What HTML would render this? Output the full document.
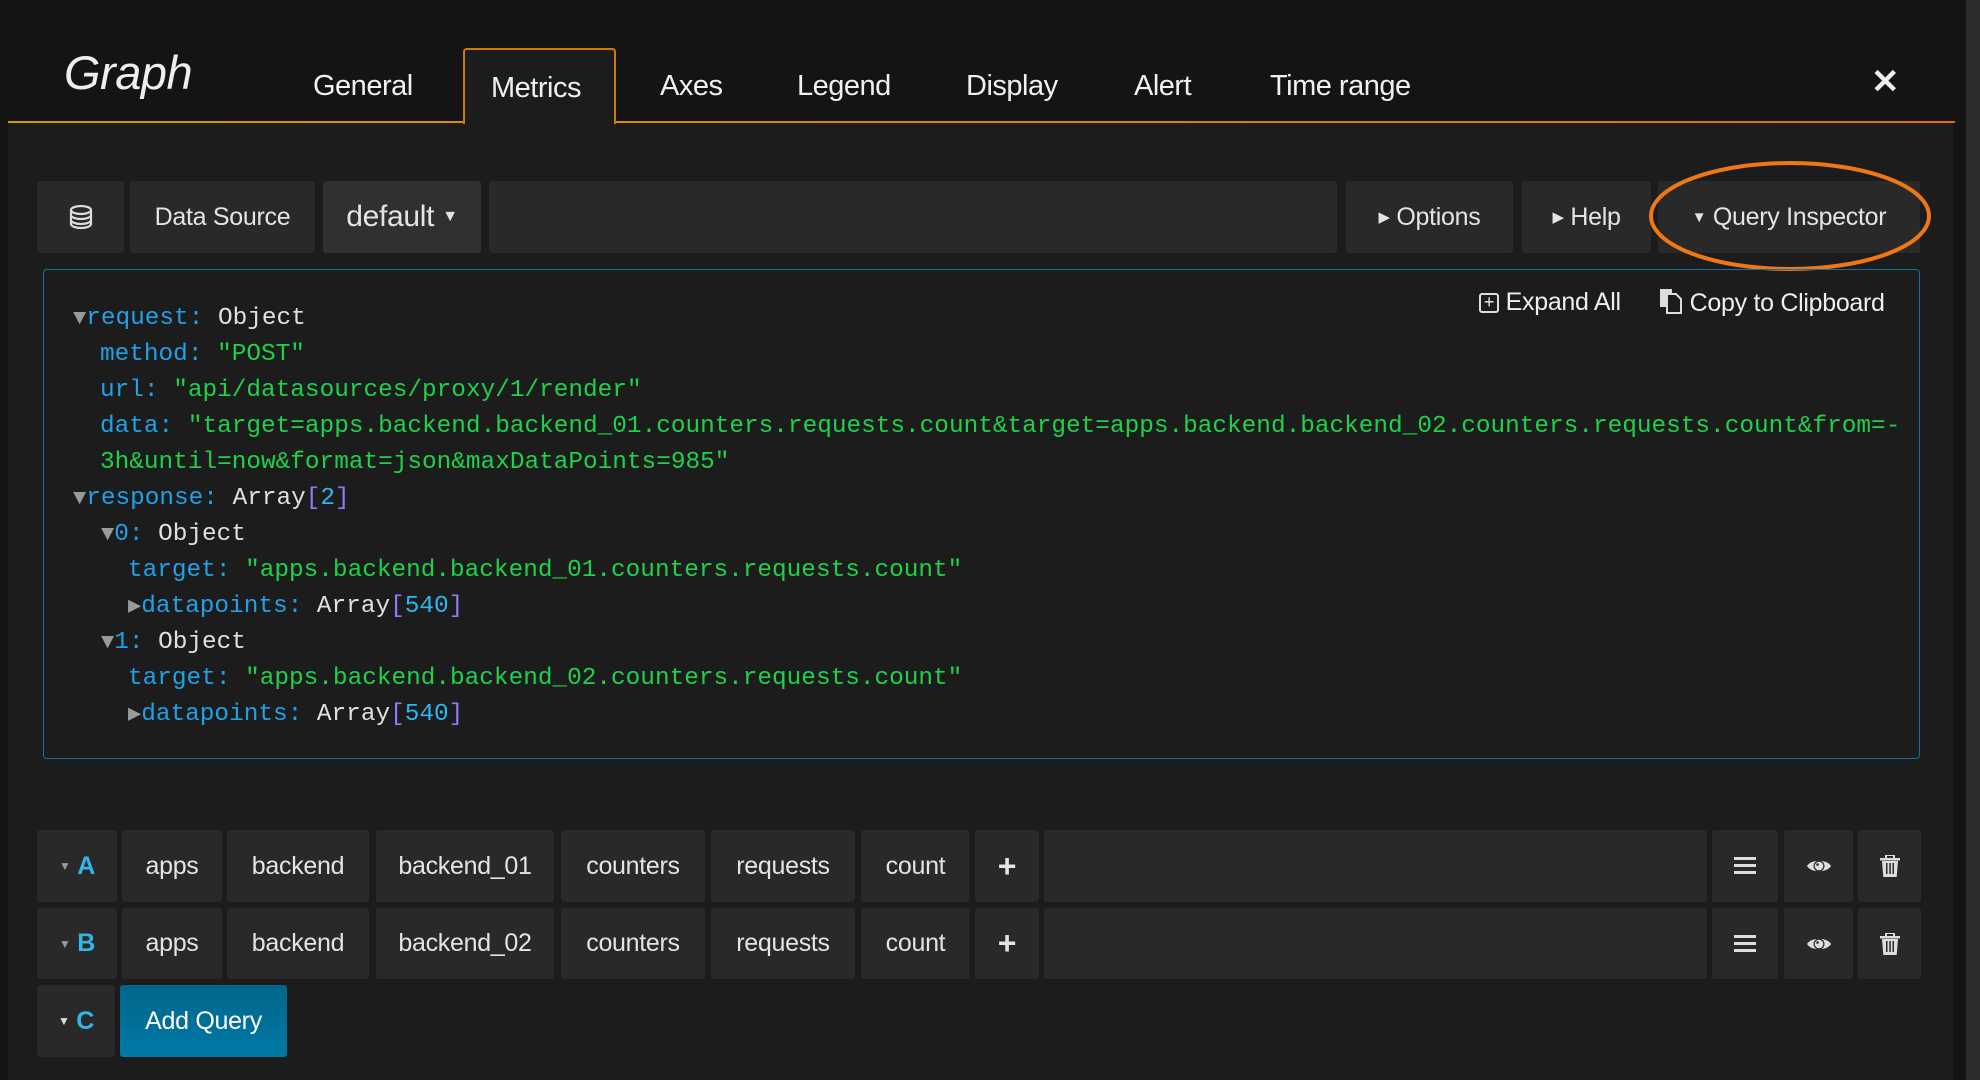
<!DOCTYPE html>
<html><head><meta charset="utf-8"><style>
*{margin:0;padding:0;box-sizing:border-box}
body{width:1980px;height:1080px;background:#141414;position:relative;overflow:hidden;font-family:"Liberation Sans",sans-serif;color:#e8e8e8}
.abs{position:absolute}
.panel{left:8px;top:122px;width:1945px;height:958px;background:#1c1c1d}
.rs{left:1966px;top:0;width:14px;height:1080px;background:#2c2c2c}
.tab{position:absolute;top:70px;font-size:29px;color:#f0f0f0;letter-spacing:-0.5px}
.box{position:absolute;background:#292929;border-radius:3px;display:flex;align-items:center;justify-content:center;font-size:25px;color:#e4e4e4;letter-spacing:-0.3px}
.mono{position:absolute;font-family:"Liberation Mono",monospace;font-size:24.4px;white-space:pre;line-height:36px;color:#e0e0e0}
.k{color:#1ea1e6}.s{color:#1fd14a}.b{color:#8a7cff}.n{color:#2fb5f0}
.tri{color:#9a9a9a;font-size:22px}
.lbl{color:#33b5e5;font-weight:bold;font-size:25px}
</style></head><body>
<div class="abs rs"></div>
<div class="abs panel"></div>
<div class="abs" style="left:8px;top:121px;width:1947px;height:2px;background:linear-gradient(90deg,#d19a00,#e07000)"></div>
<div class="abs" style="left:463px;top:48px;width:153px;height:76px;background:#1c1c1d;border:2px solid #d07a08;border-bottom:none;border-radius:4px 4px 0 0"></div>
<div class="abs" style="left:64px;top:45px;font-size:47px;font-style:italic;color:#eee;letter-spacing:-0.5px">Graph</div>
<div class="tab" style="left:313px">General</div>
<div class="tab" style="left:491px;top:72px">Metrics</div>
<div class="tab" style="left:660px">Axes</div>
<div class="tab" style="left:797px">Legend</div>
<div class="tab" style="left:966px">Display</div>
<div class="tab" style="left:1134px">Alert</div>
<div class="tab" style="left:1270px">Time range</div>
<div class="abs" style="left:1871px;top:62px;font-size:34px;font-weight:bold;color:#eee">✕</div>

<div class="box" style="left:37px;top:181px;width:87px;height:72px">
<svg width="26" height="26" viewBox="0 0 26 26" fill="none" stroke="#ddd" stroke-width="2.2"><ellipse cx="13" cy="6" rx="10" ry="4"/><path d="M3 6v14c0 2.2 4.5 4 10 4s10-1.8 10-4V6M3 11c0 2.2 4.5 4 10 4s10-1.8 10-4M3 16c0 2.2 4.5 4 10 4s10-1.8 10-4"/></svg></div>
<div class="box" style="left:130px;top:181px;width:185px;height:72px">Data Source</div>
<div class="box" style="left:323px;top:181px;width:158px;height:72px;background:#303030;font-size:30px">default&nbsp;<span style="font-size:16px">▼</span></div>
<div class="box" style="left:489px;top:181px;width:848px;height:72px"></div>
<div class="box" style="left:1346px;top:181px;width:167px;height:72px"><span style="font-size:15px">▶</span>&nbsp;Options</div>
<div class="box" style="left:1522px;top:181px;width:129px;height:72px"><span style="font-size:15px">▶</span>&nbsp;Help</div>
<div class="box" style="left:1658px;top:181px;width:262px;height:72px"><span style="font-size:15px">▼</span>&nbsp;Query Inspector</div>
<svg class="abs" style="left:1640px;top:155px" width="300" height="125"><ellipse cx="150" cy="61" rx="139" ry="53" fill="none" stroke="#f07814" stroke-width="4"/></svg>

<div class="abs" style="left:43px;top:269px;width:1877px;height:490px;border:1.5px solid #12709e;border-radius:4px"></div>
<div class="abs" style="left:1479px;top:288px;font-size:25px;color:#eee;letter-spacing:-0.3px"><span style="display:inline-block;width:20px;height:20px;border:2px solid #ddd;border-radius:3px;font-size:18px;line-height:15px;text-align:center;vertical-align:2px">+</span> Expand All</div>
<div class="abs" style="left:1659px;top:288px;font-size:25px;color:#eee;letter-spacing:-0.3px"><svg width="24" height="26" viewBox="0 0 24 26" style="vertical-align:-3px"><rect x="1" y="1" width="12" height="18" fill="#ddd"/><path d="M8 6h9l5 5v14H8z" fill="#1c1c1d" stroke="#ddd" stroke-width="2"/></svg> Copy to Clipboard</div>

<div class="mono" style="left:73px;top:301px"><span class="tri">▼</span><span class="k">request:</span> Object</div>
<div class="mono" style="left:100px;top:337px"><span class="k">method:</span> <span class="s">"POST"</span></div>
<div class="mono" style="left:100px;top:373px"><span class="k">url:</span> <span class="s">"api/datasources/proxy/1/render"</span></div>
<div class="mono" style="left:100px;top:409px"><span class="k">data:</span> <span class="s">"target=apps.backend.backend_01.counters.requests.count&amp;target=apps.backend.backend_02.counters.requests.count&amp;from=-</span></div>
<div class="mono" style="left:100px;top:445px"><span class="s">3h&amp;until=now&amp;format=json&amp;maxDataPoints=985"</span></div>
<div class="mono" style="left:73px;top:481px"><span class="tri">▼</span><span class="k">response:</span> Array<span class="b">[</span><span class="n">2</span><span class="b">]</span></div>
<div class="mono" style="left:101px;top:517px"><span class="tri">▼</span><span class="k">0:</span> Object</div>
<div class="mono" style="left:128px;top:553px"><span class="k">target:</span> <span class="s">"apps.backend.backend_01.counters.requests.count"</span></div>
<div class="mono" style="left:128px;top:589px"><span class="tri">▶</span><span class="k">datapoints:</span> Array<span class="b">[</span><span class="n">540</span><span class="b">]</span></div>
<div class="mono" style="left:101px;top:625px"><span class="tri">▼</span><span class="k">1:</span> Object</div>
<div class="mono" style="left:128px;top:661px"><span class="k">target:</span> <span class="s">"apps.backend.backend_02.counters.requests.count"</span></div>
<div class="mono" style="left:128px;top:697px"><span class="tri">▶</span><span class="k">datapoints:</span> Array<span class="b">[</span><span class="n">540</span><span class="b">]</span></div>

<!-- row A -->
<div class="box" style="left:37px;top:830px;width:80px;height:72px"><span class="tri" style="font-size:12px">▼</span>&nbsp;<span class="lbl">A</span></div>
<div class="box" style="left:122px;top:830px;width:100px;height:72px">apps</div>
<div class="box" style="left:227px;top:830px;width:142px;height:72px">backend</div>
<div class="box" style="left:376px;top:830px;width:178px;height:72px">backend_01</div>
<div class="box" style="left:561px;top:830px;width:144px;height:72px">counters</div>
<div class="box" style="left:711px;top:830px;width:144px;height:72px">requests</div>
<div class="box" style="left:861px;top:830px;width:109px;height:72px">count</div>
<div class="box" style="left:975px;top:830px;width:64px;height:72px;font-size:32px;font-weight:bold">+</div>
<div class="box" style="left:1044px;top:830px;width:663px;height:72px"></div>
<div class="box" style="left:1712px;top:830px;width:66px;height:72px"><svg width="22" height="18"><rect y="0" width="22" height="3" fill="#ddd"/><rect y="7" width="22" height="3" fill="#ddd"/><rect y="14" width="22" height="3" fill="#ddd"/></svg></div>
<div class="box" style="left:1784px;top:830px;width:69px;height:72px"><svg width="26" height="18" viewBox="0 0 26 18"><path d="M1 9C5 2 21 2 25 9C21 16 5 16 1 9Z" fill="#ddd"/><circle cx="13" cy="9" r="5.5" fill="#292929"/><circle cx="13" cy="9" r="4.3" fill="#ddd"/><circle cx="11.5" cy="7.5" r="1.3" fill="#292929"/></svg></div>
<div class="box" style="left:1858px;top:830px;width:63px;height:72px"><svg width="20" height="22" viewBox="0 0 20 22"><rect x="0" y="3" width="20" height="2.5" fill="#ddd"/><rect x="6" y="0" width="8" height="4" fill="none" stroke="#ddd" stroke-width="2"/><path d="M2 6h16l-1.3 16H3.3z" fill="#ddd"/><rect x="6" y="8" width="1.5" height="11" fill="#292929"/><rect x="9.3" y="8" width="1.5" height="11" fill="#292929"/><rect x="12.5" y="8" width="1.5" height="11" fill="#292929"/></svg></div>
<!-- row B -->
<div class="box" style="left:37px;top:908px;width:80px;height:71px"><span class="tri" style="font-size:12px">▼</span>&nbsp;<span class="lbl">B</span></div>
<div class="box" style="left:122px;top:908px;width:100px;height:71px">apps</div>
<div class="box" style="left:227px;top:908px;width:142px;height:71px">backend</div>
<div class="box" style="left:376px;top:908px;width:178px;height:71px">backend_02</div>
<div class="box" style="left:561px;top:908px;width:144px;height:71px">counters</div>
<div class="box" style="left:711px;top:908px;width:144px;height:71px">requests</div>
<div class="box" style="left:861px;top:908px;width:109px;height:71px">count</div>
<div class="box" style="left:975px;top:908px;width:64px;height:71px;font-size:32px;font-weight:bold">+</div>
<div class="box" style="left:1044px;top:908px;width:663px;height:71px"></div>
<div class="box" style="left:1712px;top:908px;width:66px;height:71px"><svg width="22" height="18"><rect y="0" width="22" height="3" fill="#ddd"/><rect y="7" width="22" height="3" fill="#ddd"/><rect y="14" width="22" height="3" fill="#ddd"/></svg></div>
<div class="box" style="left:1784px;top:908px;width:69px;height:71px"><svg width="26" height="18" viewBox="0 0 26 18"><path d="M1 9C5 2 21 2 25 9C21 16 5 16 1 9Z" fill="#ddd"/><circle cx="13" cy="9" r="5.5" fill="#292929"/><circle cx="13" cy="9" r="4.3" fill="#ddd"/><circle cx="11.5" cy="7.5" r="1.3" fill="#292929"/></svg></div>
<div class="box" style="left:1858px;top:908px;width:63px;height:71px"><svg width="20" height="22" viewBox="0 0 20 22"><rect x="0" y="3" width="20" height="2.5" fill="#ddd"/><rect x="6" y="0" width="8" height="4" fill="none" stroke="#ddd" stroke-width="2"/><path d="M2 6h16l-1.3 16H3.3z" fill="#ddd"/><rect x="6" y="8" width="1.5" height="11" fill="#292929"/><rect x="9.3" y="8" width="1.5" height="11" fill="#292929"/><rect x="12.5" y="8" width="1.5" height="11" fill="#292929"/></svg></div>
<!-- row C -->
<div class="box" style="left:37px;top:985px;width:78px;height:72px"><span class="tri" style="font-size:12px;color:#ddd">▼</span>&nbsp;<span class="lbl">C</span></div>
<div class="box" style="left:120px;top:985px;width:167px;height:72px;background:linear-gradient(#00658a,#0079a6);color:#fff">Add Query</div>
</body></html>
